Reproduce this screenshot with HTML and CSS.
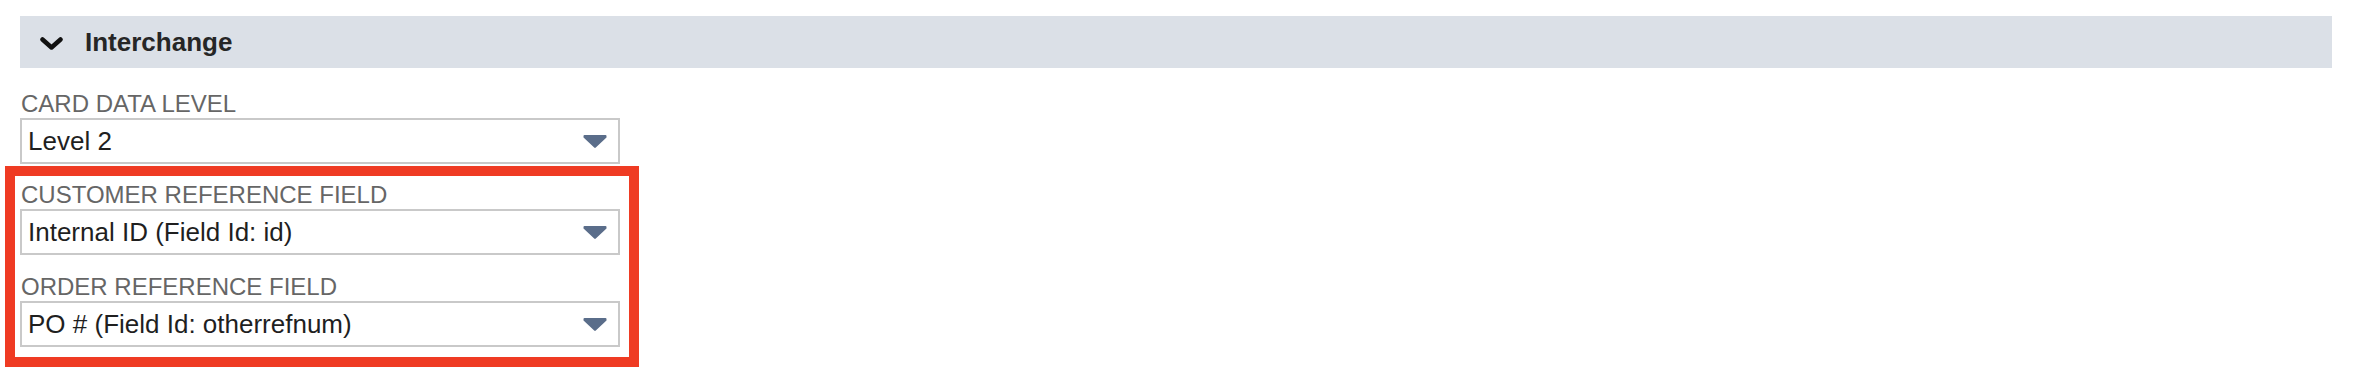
FILE: index.html
```html
<!DOCTYPE html>
<html lang="en">
<head>
    <meta charset="UTF-8">
    <meta name="viewport" content="width=device-width, initial-scale=1.0">
    <title>Interchange</title>
    <link rel="stylesheet" href="styles.css">
</head>
<body>
    <div class="page">
        <div class="section-head">
            <svg class="chevron" width="23" height="13" viewBox="0 0 23 13">
                <polyline points="2.5,2.5 11.5,10.5 20.5,2.5" fill="none" stroke="#111" stroke-width="4.5" stroke-linecap="round" stroke-linejoin="round"/>
            </svg>
            <span>Interchange</span>
        </div>

        <div class="field first">
            <label class="field-label">CARD DATA LEVEL</label>
            <div class="select">
                <span>Level 2</span>
                <svg class="arrow" width="24" height="15" viewBox="0 0 24 15">
                    <path d="M1.5 1 H22.5 Q23.5 1 23.5 2 V3.6 L12.8 13.6 Q12 14.4 11.2 13.6 L0.5 3.6 V2 Q0.5 1 1.5 1 Z" fill="#5a6d8a"/>
                </svg>
            </div>
        </div>

        <div class="highlight">
            <div class="field">
                <label class="field-label">CUSTOMER REFERENCE FIELD</label>
                <div class="select">
                    <span>Internal ID (Field Id: id)</span>
                    <svg class="arrow" width="24" height="15" viewBox="0 0 24 15">
                        <path d="M1.5 1 H22.5 Q23.5 1 23.5 2 V3.6 L12.8 13.6 Q12 14.4 11.2 13.6 L0.5 3.6 V2 Q0.5 1 1.5 1 Z" fill="#5a6d8a"/>
                    </svg>
                </div>
            </div>
            <div class="field">
                <label class="field-label">ORDER REFERENCE FIELD</label>
                <div class="select">
                    <span>PO # (Field Id: otherrefnum)</span>
                    <svg class="arrow" width="24" height="15" viewBox="0 0 24 15">
                        <path d="M1.5 1 H22.5 Q23.5 1 23.5 2 V3.6 L12.8 13.6 Q12 14.4 11.2 13.6 L0.5 3.6 V2 Q0.5 1 1.5 1 Z" fill="#5a6d8a"/>
                    </svg>
                </div>
            </div>
        </div>
    </div>
</body>
</html>
```

FILE: styles.css
```css
*{
    margin: 0;
    padding: 0;
    box-sizing: border-box;
}
body{
    font-family: "Liberation Sans", Arial, Helvetica, sans-serif;
    background-color: #fff;
}
.page{
    padding: 16px 26px 0 20px;
}
.section-head{
    display: flex;
    align-items: center;
    gap: 22px;
    height: 52px;
    padding-left: 20px;
    background-color: #dbe0e7;
    font-size: 26px;
    font-weight: bold;
    color: #262626;
}
.chevron{
    display: block;
    margin-top: 2px;
}
.field.first{
    margin-top: 22px;
}
.field-label{
    display: block;
    padding-left: 1px;
    font-size: 24px;
    line-height: 28px;
    color: #666;
}
.select{
    display: flex;
    align-items: center;
    justify-content: space-between;
    width: 600px;
    height: 46px;
    padding: 0 11px 0 6px;
    border: 2px solid #c9c9c9;
    font-size: 26px;
    color: #1f1f1f;
}
.arrow{
    display: block;
}
.highlight{
    width: 634px;
    margin: 2px 0 0 -15px;
    padding: 5px 9px 10px 5px;
    border: 10px solid #ef3b23;
}
.highlight .field + .field{
    margin-top: 18px;
}
```
